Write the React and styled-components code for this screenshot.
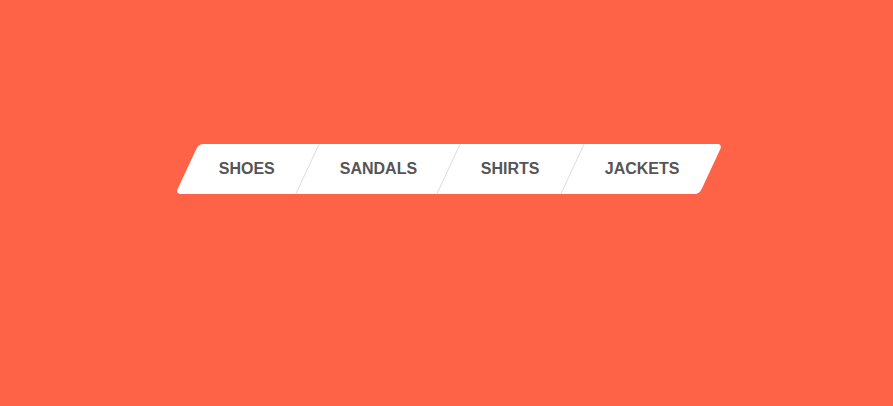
import React from 'react'
import styled, { createGlobalStyle } from 'styled-components'

const GlobalStyle = createGlobalStyle`
  html, body {
    margin: 0;
    padding: 0;
    background: #ff6347;
  }
`

const Page = styled.main`
  min-height: 406px;
  display: flex;
  justify-content: center;
  align-items: flex-start;
  padding-top: 144px;
  box-sizing: border-box;
  font-family: 'Liberation Sans', Arial, sans-serif;
`

const Menu = styled.ul`
  list-style: none;
  margin: 0 0 0 4px;
  padding: 0;
  display: flex;
  background: #fff;
  border-radius: 5px;
  transform: skewX(-25deg);
  overflow: hidden;
`

const Item = styled.li`
  border-right: ${(p) => (p.$last ? 'none' : '1px solid #dcdcdc')};
`

const Link = styled.a`
  display: block;
  height: 50px;
  line-height: 50px;
  padding: 0 31.75px;
  font-size: 16px;
  font-weight: 700;
  color: #555;
  text-decoration: none;
  text-transform: uppercase;
  transform: skewX(25deg);
  cursor: pointer;
`

const items = ['Shoes', 'Sandals', 'Shirts', 'Jackets']

const App = () => {
  return (
    <Page>
      <GlobalStyle />
      <Menu>
        {items.map((name, i) => (
          <Item key={name} $last={i === items.length - 1}>
            <Link>{name}</Link>
          </Item>
        ))}
      </Menu>
    </Page>
  )
}

export default App
